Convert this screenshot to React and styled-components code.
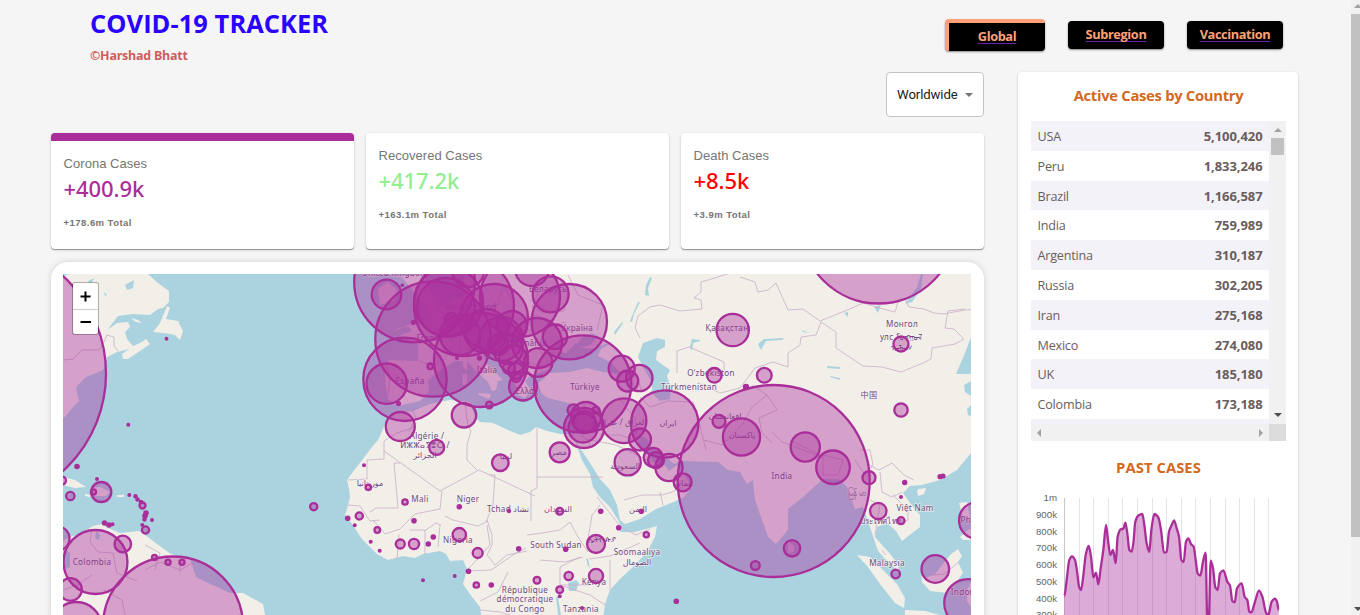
import React from "react";
import styled, { createGlobalStyle } from "styled-components";

const GlobalStyle = createGlobalStyle`
  * { box-sizing: border-box; }
  body { margin: 0; background: #f5f5f5; overflow: hidden; }
`;

const ui = `"Open Sans", "Noto Sans", sans-serif`;
const arial = `"Liberation Sans", Arial, sans-serif`;
const purple = "#aa2e9a";

const Frame = styled.div`
  display: flex;
  width: 1360px;
  height: 615px;
  overflow: hidden;
  background: #f5f5f5;
  font-family: ${ui};
`;
const Page = styled.main`
  width: 1351px;
  flex: none;
  display: flex;
  flex-direction: column;
`;
const Header = styled.header`
  height: 72px;
  flex: none;
  display: flex;
  justify-content: space-between;
  padding: 0 68px 0 90px;
`;
const Brand = styled.div`
  display: flex;
  flex-direction: column;
`;
const Title = styled.h1`
  margin: 6px 0 0;
  font-size: 25.4px;
  line-height: 34px;
  font-weight: 700;
  letter-spacing: 0.08px;
  white-space: nowrap;
  color: #2a00ff;
`;
const Author = styled.h5`
  margin: 7px 0 0;
  font-size: 12.4px;
  line-height: 18px;
  font-weight: 700;
  letter-spacing: -0.2px;
  color: #cd5c5c;
`;
const Nav = styled.nav`
  display: flex;
  align-items: flex-start;
  gap: 23px;
  padding-top: 19px;
`;
const NavButton = styled.a`
  width: ${(p) => (p.$active ? 100 : 96)}px;
  height: ${(p) => (p.$active ? 32 : 28)}px;
  margin-top: ${(p) => (p.$active ? 0 : 2)}px;
  border: 0 solid #ffa07a;
  border-width: ${(p) => (p.$active ? "4px 0 0 4px" : "0")};
  border-radius: 4px;
  background: #000;
  box-shadow: 0 1px 2px rgba(0, 0, 0, 0.45);
  text-align: center;
  font-size: 12.8px;
  line-height: 27px;
  font-weight: 700;
  letter-spacing: -0.4px;
  color: #ffa07a;
  text-decoration: underline;
  text-decoration-color: #6a22a8;
  text-decoration-skip-ink: none;
  text-underline-offset: 2px;
  text-decoration-thickness: 1px;
`;
const Body = styled.div`
  display: flex;
  gap: 34px;
  padding-left: 51px;
`;
const Main = styled.section`
  width: 933px;
  display: flex;
  flex-direction: column;
`;
const Select = styled.div`
  align-self: flex-end;
  width: 98px;
  height: 45px;
  display: flex;
  align-items: center;
  gap: 7px;
  padding-left: 10px;
  border: 1px solid #c4c4c4;
  border-radius: 4px;
  background: #fff;
  font-family: Roboto, ${arial};
  font-size: 13.2px;
  letter-spacing: -0.12px;
  color: #222;
`;
const Caret = styled.i`
  border: 4px solid transparent;
  border-top-color: #757575;
  border-bottom: 0;
`;
const Cards = styled.div`
  display: flex;
  gap: 12px;
  margin-top: 16px;
`;
const StatCard = styled.article`
  width: 303px;
  height: 116px;
  padding: 13px 12.6px;
  border-top: ${(p) => (p.$active ? `8px solid ${purple}` : "0")};
  border-radius: 4px;
  background: #fff;
  box-shadow: 0 1px 0 #999, 0 1px 3px rgba(0, 0, 0, 0.2);
  font-family: ${arial};
  color: #757575;
`;
const StatLabel = styled.div`
  font-size: 13px;
  line-height: 20px;
  letter-spacing: 0.03px;
`;
const StatValue = styled.div`
  font-family: "Noto Sans", ${ui};
  font-size: 22px;
  line-height: 30px;
  margin-top: -1px;
  font-weight: 500;
  letter-spacing: -0.1px;
  color: ${(p) => p.$color};
`;
const StatTotal = styled.div`
  margin-top: 12px;
  font-size: 9.5px;
  line-height: 16px;
  font-weight: 700;
  letter-spacing: 0.45px;
`;
const MapCard = styled.section`
  margin-top: 13px;
  height: 370px;
  padding: 12px 13px 0 12px;
  border-radius: 17px;
  background: #fff;
  box-shadow: 0 0 6px rgba(0, 0, 0, 0.16);
`;
const MapView = styled.div`
  position: relative;
  height: 358px;
  overflow: hidden;
  background: #aad3df;
`;
const ZoomControl = styled.div`
  position: absolute;
  left: 9px;
  top: 8px;
  width: 27px;
  height: 53px;
  border: 1px solid rgba(0, 0, 0, 0.27);
  border-radius: 3px;
  background: #fff;
  background-clip: padding-box;
`;
const ZoomButton = styled.div`
  height: 26px;
  display: flex;
  align-items: center;
  justify-content: center;
  padding-right: 1px;
  & + & { height: 25px; border-top: 1px solid #ccc; }
`;
const Side = styled.aside`
  width: 280px;
  height: 560px;
  padding: 0 12px 0 13px;
  border-radius: 4px;
  background: #fff;
  box-shadow: 0 1px 3px rgba(0, 0, 0, 0.2);
`;
const SideTitle = styled.h3`
  margin: 0;
  height: ${(p) => p.$h}px;
  padding-top: ${(p) => p.$top}px;
  text-align: center;
  font-size: 14.8px;
  line-height: 20px;
  font-weight: 700;
  letter-spacing: ${(p) => p.$track}px;
  color: #d2691e;
`;
const TableBox = styled.div`
  display: grid;
  grid-template: 303px 17px / 238px 17px;
`;
const Table = styled.div`
  overflow: hidden;
`;
const Row = styled.div`
  height: 29.8px;
  display: flex;
  justify-content: space-between;
  padding: 0 6.5px;
  line-height: 31px;
  font-size: 12.6px;
  letter-spacing: -0.2px;
  color: #6a5d5d;
  background: ${(p) => (p.$odd ? "#f3f2f8" : "#fff")};
  b { font-weight: 700; font-size: 13px; letter-spacing: -0.08px; }
`;
const VBar = styled.div`
  display: flex;
  flex-direction: column;
  align-items: center;
  padding: 7px 0;
  background: #f1f1f1;
`;
const HBar = styled.div`
  display: flex;
  align-items: center;
  justify-content: space-between;
  padding: 0 6px;
  background: #f1f1f1;
`;
const Corner = styled.div`
  background: #dcdcdc;
`;
const Thumb = styled.div`
  flex: none;
  width: ${(p) => p.$w}px;
  height: ${(p) => p.$h}px;
  background: #c1c1c1;
`;
const Arrow = styled.i`
  width: 0;
  height: 0;
  flex: none;
  border: 4px solid transparent;
  ${(p) => ({
    up: "border-top:0;border-bottom-color:#a3a3a3;margin-bottom:6px;",
    down: "border-bottom:0;border-top-color:#505050;margin-top:auto;",
    left: "border-left:0;border-right-color:#a3a3a3;",
    right: "border-right:0;border-left-color:#a3a3a3;",
  })[p.$dir]}
`;
const PageBar = styled.div`
  width: 13px;
  flex: none;
  display: flex;
  flex-direction: column;
  align-items: center;
  padding: 4px 0 0;
  background: #f1f1f1;
`;
const PageBarEnd = styled.div`
  padding-top: 74px;
`;

const LAND = [
  // North America and nearby islands
  "M63 276L70 274H148L158 283L169 291V302L163 308L158 309L150 315L132 314L118 316L112 324L103 336L106 331L117 323L128 322L130 327L125 332L127 339L133 346L140 343L146 339L150 344L140 351L128 359L123 359L122 354L129 349L117 352L107 357L103 370L96 373L86 377L77 386L76 389L79 401L72 408L66 416L63 418Z",
  "M167 306L170 308L166 319L178 321L183 331L180 340L175 335L164 333L153 332L160 323Z",
  "M131 318L138 320L142 323L136 322Z",
  "M63 477L75 480L86 487L75 488L63 485Z",
  "M92 488L100 487L110 492L106 496L94 496Z",
  "M117 495h7v2h-7z", "M85 494l5 1v2l-5-1z",
  // South America
  "M63 541L70 537L80 534L93 526L102 524L108 528L120 533L139 531L148 537L157 544L171 554L190 559L196 577L206 582L230 593L243 593L263 604L266 620H63V570L70 567V553L63 548Z",
  // Africa
  "M378 440L387 420L396 413L413 411L430 404L450 400L470 402L475 417L480 422L493 423L508 430L520 435L530 432L536 427L547 431L560 434L573 434L576 443L582 460L590 474L593 487L600 497L610 507L618 520L622 528L620 532L635 532L657 526L655 537L647 552L633 567L620 579L610 590L605 604L603 620H482L480 607L472 597L463 584L467 569L463 560L450 561L446 554L440 551L423 554L415 558L403 556L388 560L377 554L362 539L352 524L345 515L347 509L350 497L349 489L347 480L355 469L363 459L372 447Z",
  // Europe
  "M384 365L390 360L418 361L418 345L400 335L412 331L408 326L420 325L430 313L442 306L449 300L463 297L468 290L462 282L466 274H971V337L965 353L956 374H971V453L957 470L940 480L922 485L910 486L903 493L910 503L920 515L920 527L902 541L896 531L887 523L877 527L875 537L882 545L891 555L898 565L899 572L888 562L878 551L872 533L868 521L863 507L855 509L847 487L839 479L823 479L815 486L803 497L788 509L788 530L776 544L768 537L762 520L755 500L753 480L747 484L740 472L728 470L718 462L682 461L674 464L666 457L655 452L646 438L638 434L638 445L646 451L653 462L663 463L669 471L677 465L683 473L692 487L684 497L676 501L656 509L640 519L625 524L620 520L617 505L610 490L600 479L590 463L580 448L574 437L578 422L580 403L572 404L560 401L548 398L542 394L538 383L545 378L543 373L552 373L570 372L587 368L603 372L621 374L612 363L598 356L601 349L613 342L602 345L592 349L583 348L576 343L566 353L560 352L552 362L548 370L540 373L531 375L525 381L531 390L525 398L518 395L514 382L507 370L497 362L490 352L483 352L486 364L498 375L503 380L498 381L496 390L492 391L488 382L475 370L467 361L455 361L445 367L428 380L429 391L420 401L398 406L388 399L386 387Z",
  "M393 332L408 325L432 322L423 315L428 308L418 299L412 290L401 276L424 274L431 291L438 304L434 318L422 325L398 328Z",
  "M378 289L388 282L397 290L394 301L380 305Z",
  "M463 361l4-2v11l-4-3zM462 374h5v10l-4 1zM478 393l13 1-2 5-10-4z",
  // South-east Asian islands
  "M857 555L870 557L884 571L897 584L905 598L904 608L895 603L880 584L868 567Z",
  "M905 610L925 611L940 615H905Z",
  "M921 572L925 578L935 574L950 555L958 549L962 556L958 562L963 573L955 584L948 593L930 591L922 582Z",
  "M918 489l8-1-2 6-6 2-1-4z", "M960 537l9-8 2 1v10h-8zM959 503l8-1 4 20-8-5z",
  "M788 541l6 5v6l-6 1zM967 590l4-8v25l-4-6z",
];
const WATER = [
  "M638 357L643 343L657 338L665 340V347L657 351L656 360L670 370L667 376L671 388L670 399L660 401L652 393V383L643 367Z",
  "M577 345l5-8 10-4 6 3 -7 9-8 2z",
  "M905 304l12-17 4-13h2l-2 15-9 13z",
  "M758 344l6-5 20-1-2 2-16 1-5 9z",
  "M568 583l8-3 3 3-3 8h-7z", "M586 558l2 8 2 2-2-9zM556 597l2 18h3l-3-18z",
  "M645 295l1-10 4-8 2 1-4 10 1 8z", "M638 302h2l-6 12-2 8-2-1zM614 332l8-10 1 1-8 12zM690 347l2-8 8 1v1l-7 2-1 8z",
  "M125 285l9-5-1 8-6 2zM88 281l7-3-5 6zM104 292l3 3-2 1zM80 297l8 2-4 2z",
  "M844 313l4-1v5zM827 366l13 1v2l-13-1zM830 376l10 2v2l-10-3zM802 330l7 3-6-1z", "M874 307l7-2-3 8z",
  "M96 531l4 4-1 5-4-2z",
  "M971 381l-7 4 1 7 6 4z",
  "M971 405l-4 4 1 6 3 1z",
];
const BORDERS = [
  "M63 360L73 359L82 350L99 350L104 342L107 335L114 337V346L118 351",
  "M384 451v8l-17 1v19l-19 1M384 451L440 491M384 451v-10l13-8 15-5 4-5M412 409l4 9-7 14",
  "M400 463l-6 0 4 45h-22l-6 4M348 505l12 1 10 15 10-1M440 491l39-21 11 5M465 402l3 24 3 5-4 14v15l10 10",
  "M442 491l-2 18-15 3-10 2-15 15-15 5-12-14M490 475l5 0 -2 30-7 17-8 4-25-6-8-4M490 475l45 21M537 428v60l-6 3v30M537 477h66",
  "M399 534l-2 25M425 530v25M440 525l-2 22M410 530l16 0 10-7 5 2M487 525l3 20-18 20-5 5M487 520l5 15 0 10-5 10 8 10 12-10 20-4M527 535l15-2 18-3 10-8 8 15 10 15M526 548l-10 5-25 17-24 1M540 560l25 2 18-5M580 557l-20 10 0 18 28 0M560 585l30 10 15 10",
  "M587 545l5-30 8-10M597 497l24 30 15 8 14-6M640 543l-30 13-21 3M610 560v30M480 601l18-9 10-20M480 610l20 2 10 3",
  "M624 500l18-5h20l10-3 12-6M660 492l3 13M586 439l30 6 35 17M590 445l-9-12M600 435l20 0 15 5",
  "M635 328l5 10M635 328l3-12 12-9 10-2 20 6 22-2-1-9-7-2 7-6v-10l14-4 15-5 9-4M677 373v-22l12-4 35 15v14l-10 10M740 277l15 5 3 10 10-2 8-7 12 27 15-1 17 12 25-10 18-8 20 6 12 3 4-13 6 0 4 8 15 2 10 4 10 1 20-4 20-1 5-15",
  "M821 322l15 10v16l9 6 18 12 19 1 19 5 22-9 8-4 1-11 23-4 9-5-10-10-9-1 3-17 17-2",
  "M821 322l-5 13-15 2-1 8-12 8 0 14-15-5-18 6-15 20-20 5-22-10M752 385l15 10 10 15-18 8 3 15 10 10M767 395l-15 12-10 18-20 20-18-5M772 432l10 10 40 15M790 440l30 15M823 455l20 5-5 15-15 0zM860 450l10 0 3 15-8 10-10-15M869 465l10 5 13-7 12 12 10 5M880 472l2 20 10 5 10-5M893 495l15 15v10l-10 5-5-5M870 500l10 5-5 30M882 550l4 5",
  "M420 361l14 5M441 365l12-20-8-15M438 310l12 12 15 8 10-5M450 295l15-2 13 20 20-8 5-20M503 285l12 20-10 15-24 8M481 330l25 5 8 15-20 4M515 320l22-5 14 10 15-3M540 289l-8 18 12 6 20-2 4-20M568 275l10 20 25 10-6 25M515 340l20 3 8 12M510 360l20 3 12 4M386 366l4 10-2 20",
  "M640 397l10 10 18-6 25 1 8 28 5 20M620 400l15 18 2 18M580 403l15 10-5 20M612 370l25 5 4 15",
  "M92 529l-2 13 8 10 15 1 4 20 20 8M145 570l15-8 20 8 18-10M145 545l15 8-5 17M180 562v10M104 590l18 10 3 15M92 575l-15 10-14 5",
  "M932 575l12-1 15-12M460 320v28l12 2M500 314l-4 20M530 300l20 12",
];
const LABELS = [
  [395, 276, "United Kingdom"], [471, 310, "Deutschland"], [430, 341, "France"], [410, 384, "España"], [487, 373, "Italia"],
  [548, 292, "Беларусь"], [577, 331, "Україна"], [529, 346, "România"], [585, 390, "Türkiye"], [527, 394, "Ελλάς"],
  [727, 331, "Қазақстан"], [711, 376, "O‘zbekiston"], [689, 390, "Türkmenistan"], [668, 426, "ایران"], [622, 425, "العراق / عێراق"],
  [902, 327, "Монгол"], [901, 340, "улс ᠮᠣᠩᠭᠣᠯ"], [901, 351, "ᠤᠯᠤᠰ"], [869, 398, "中国"], [725, 419, "افغانستان"], [742, 438, "پاکستان"],
  [782, 479, "India"], [857, 496, "မြန်မာ"], [915, 511, "Việt Nam"], [881, 524, "ประเทศไทย"], [887, 566, "Malaysia"], [983, 523, "Philippines"], [971, 595, "Indonesia"],
  [427, 439, "Algérie /"], [425, 448, "ⵍⵣⵣⴰⵢⴻⵔ /"], [425, 458, "الجزائر"], [370, 486, "موريتانيا"], [420, 502, "Mali"], [468, 502, "Niger"],
  [508, 512, "Tchad تشاد"], [458, 543, "Nigeria"], [506, 459, "ليبيا"], [559, 455, "مصر"], [625, 469, "السعودية"], [684, 486, "عمان"],
  [558, 512, "السودان"], [638, 512, "اليمن"], [556, 548, "South Sudan"], [602, 542, "ኢትዮጵያ"], [637, 555, "Soomaaliya"], [637, 565, "الصومال"],
  [594, 585, "Kenya"], [525, 593, "République"], [525, 602, "démocratique"], [525, 612, "du Congo"], [581, 612, "Tanzania"], [92, 565, "Colombia"],
];
const RINGS = [
  [-26, 373.5, 132], [62, 480.5, 4], [70.3, 496, 4.2], [93.5, 492, 2.6], [101.3, 492, 10], [142.5, 505.5, 3], [145.5, 530, 3.6],
  [95.5, 562, 32], [122.8, 544, 8.3], [57.5, 538.5, 12], [70.5, 589.5, 11.3], [76.5, 627, 25], [173, 626.5, 70], [154.5, 557.5, 2.5], [168, 562.3, 2.6], [182, 562.3, 2.6],
  [414.5, 282, 60.3], [386.5, 294.5, 14.8], [433, 339, 57.7], [405, 379.3, 41.7], [386.7, 383.7, 20.2], [430.3, 366.3, 2.8], [400.3, 426.5, 14.5], [464, 415.3, 12.2], [489.3, 405, 3.3],
  [448.5, 302, 34.5], [464, 306, 50], [446, 307, 29], [481, 360, 47], [468, 271, 16], [494, 318, 34], [451.5, 320, 7], [460, 335, 20],
  [486, 331, 22], [512, 326, 15], [501, 339, 22], [508, 349, 15], [498, 345, 10], [513, 359, 14], [516, 371, 8], [509, 368, 6], [516, 377, 5], [520, 297, 40],
  [532, 269, 17], [550.7, 294.3, 18], [537, 343, 25], [555, 336.7, 12.2], [538, 362.5, 14.3], [523, 386.5, 14], [569.3, 321.7, 37.7], [582.7, 384, 48.6],
  [621.7, 368.7, 13], [627.7, 381, 10.5], [639.3, 378, 13.2], [624, 420.7, 22.4], [664.7, 424, 33.7], [584, 428, 20], [583, 428, 14.5], [584.5, 422, 11], [586, 417, 15], [573.3, 410, 5.7], [596, 410, 3.4],
  [640, 439.5, 11], [653.3, 457.5, 9.5], [656, 460, 8], [669, 467.5, 13.6], [682.7, 482.3, 9], [627.7, 462.3, 13.1], [559.7, 452.3, 10], [500.3, 462.7, 8.3], [436.7, 447.3, 7.5],
  [732.7, 330, 16.2], [714.3, 375.3, 7.3], [764.3, 375.3, 7.4], [719, 421.3, 6.5], [741.5, 437, 18.6], [773.7, 481, 96], [805.3, 447, 14.6], [833, 467.3, 16.8], [869, 477.7, 6.5], [792, 548.3, 8.2], [755.3, 565.5, 4.4],
  [878.3, 511, 8.2], [901, 520.7, 3.5], [895.7, 574, 4.3], [935.3, 569, 13.8], [968, 603, 23.8], [977.5, 520.5, 18.5], [901, 344, 7.5], [901, 410, 6.7], [878.5, 226, 77.5],
  [313.7, 506.7, 3.6], [368.3, 487.3, 2.7], [405, 502, 2.7], [359.3, 516, 3.6], [377.3, 530, 2.8], [400.3, 544, 4.5], [414, 544, 5.1], [459.3, 534.7, 6.7], [477.7, 553, 5], [476.3, 585, 2.7],
  [559.7, 511.3, 3.4], [596, 544, 9], [646.3, 534.7, 2.6], [568.7, 576, 4.2], [596, 576, 7.1], [537, 580.3, 3.4], [559.7, 589.7, 3.4],
];
const DOTS = [
  [166.5, 338.7, 2], [128.3, 424.7, 2], [77, 466.5, 2.8], [97, 479, 2], [129.3, 495, 2], [135.5, 496.3, 2.2], [137.5, 499.5, 2.3], [141, 502, 2.3], [146, 513, 2.8], [145, 516, 2.8], [144.5, 519.5, 2.2], [152, 520, 2], [142.3, 525, 2],
  [104.5, 523, 2.8], [109, 525, 2.8], [112.5, 524.3, 2], [402.3, 285.3, 1.8], [413.5, 322.3, 2.6], [398.5, 403.5, 2.6], [457, 358, 2], [479.5, 358, 2.8], [746, 387, 3.2],
  [904.7, 482.5, 2.7], [901, 497, 2], [940, 476.7, 2.6], [943, 476, 2.6], [364, 465.3, 2], [347.7, 518.3, 2.8], [354.7, 525.3, 2], [370.7, 541.7, 2], [379.7, 550.7, 2], [428.3, 544, 2.8], [433.3, 537, 2.8], [414, 520.7, 2.8], [459.3, 506.7, 2.8],
  [468.5, 571.3, 2.8], [454.7, 576, 2], [423, 580.3, 2], [491.3, 585, 2.8], [509, 511, 2.2], [600.7, 511.3, 2.8], [641.3, 511.3, 2.8], [618.7, 527.7, 2.8], [518.7, 548.7, 2.8], [565.7, 549.3, 2.8], [559.7, 596.3, 2], [582, 608, 2], [676.3, 601.3, 2.8],
];

const WorldMap = () => (
  <svg width="908" height="341" viewBox="63 274 908 341" style={{ display: "block" }}>
    <rect x="63" y="274" width="908" height="341" fill="#aad3df" />
    <g fill="#f2efe9">{LAND.map((d) => <path key={d} d={d} />)}</g>
    <g fill="#aad3df">{WATER.map((d) => <path key={d} d={d} />)}</g>
    <g fill="none" stroke="#c9adc8" strokeWidth="0.8" strokeLinejoin="round">
      {BORDERS.map((d) => <path key={d} d={d} />)}
    </g>
    <g fill="#6d4a7c" stroke="#f7f3f2" strokeWidth="1.4" strokeOpacity="0.75" paintOrder="stroke" textAnchor="middle"
      fontFamily='"Noto Sans", "DejaVu Sans", "Noto Sans CJK SC", sans-serif' fontSize="8.1" letterSpacing="0.3">
      {LABELS.map(([x, y, t]) => <text key={t} x={x} y={y}>{t}</text>)}
    </g>
    <g fill={purple} fillOpacity="0.4" stroke={purple} strokeWidth="2.3">
      {RINGS.map(([x, y, r], i) => <circle key={i} cx={x} cy={y} r={r} />)}
    </g>
    <g fill={purple}>{DOTS.map(([x, y, r], i) => <circle key={i} cx={x} cy={y} r={r} />)}</g>
  </svg>
);

const SERIES = [
  [163,1068],[170,1020],[178,960],[186,949],[195,960],[202,1000],[207,1040],[213,1050],[219,1015],[228,940],[236,918],[243,950],[250,1012],[258,998],[265,1033],[272,985],[280,930],[288,855],[294,900],[301,945],[309,930],[317,970],[323,890],[332,868],[340,866],[346,848],[352,880],[358,930],[365,935],[370,910],[376,845],[386,826],[397,822],[403,855],[410,910],[418,936],[424,870],[433,822],[445,832],[453,870],[462,938],[470,936],[477,875],[485,855],[492,841],[500,865],[507,890],[514,960],[521,966],[528,905],[535,895],[543,912],[551,920],[557,960],[563,1000],[571,1007],[579,965],[587,938],[592,1150],[596,1150],[602,962],[609,985],[616,1042],[623,1050],[630,1000],[640,991],[652,1025],[660,1037],[667,1083],[674,1087],[681,1045],[695,1030],[704,1070],[712,1080],[718,1115],[724,1117],[735,1085],[747,1052],[757,1070],[768,1118],[775,1125],[785,1085],[795,1076],[801,1085],[806,1110],
].map(([x, y]) => [x / 3 - 21, y / 3 - 245]);

const smooth = (pts) => {
  const slope = pts.map((p, i) => {
    if (i === 0 || i === pts.length - 1) return 0;
    const a = (p[1] - pts[i - 1][1]) / (p[0] - pts[i - 1][0]);
    const b = (pts[i + 1][1] - p[1]) / (pts[i + 1][0] - p[0]);
    return a * b <= 0 ? 0 : (2 * a * b) / (a + b);
  });
  return pts.map((p, i) => {
    if (i === 0) return `M${p[0]} ${p[1]}`;
    const q = pts[i - 1];
    const h = (p[0] - q[0]) / 3;
    return `C${q[0] + h} ${q[1] + slope[i - 1] * h} ${p[0] - h} ${p[1] - slope[i] * h} ${p[0]} ${p[1]}`;
  }).join("");
};
const LINE = smooth(SERIES);
const GRID = [48.5, 62.5, 77.5, 91.5, 106.5, 121.5, 135.5, 150.5, 164.5, 179.5, 194.5, 208.5, 223.5, 237.5];
const TICKS = ["1m", "900k", "800k", "700k", "600k", "500k", "400k", "300k"];

const PastCases = () => (
  <svg width="255" height="130" viewBox="0 0 255 130" style={{ display: "block" }}>
    <g stroke="#e5e5e5">{GRID.map((x) => <path key={x} d={`M${x} 13V130`} />)}</g>
    <path d="M33.5 13V130" stroke="#c8c8c8" />
    <path d={`${LINE}V140H33.3Z`} fill={purple} fillOpacity="0.4" />
    <path d={LINE} fill="none" stroke={purple} strokeWidth="2.3" strokeLinejoin="round" />
    <g fill="#666" fontFamily={arial} fontSize="9.7" textAnchor="end">
      {TICKS.map((t, i) => <text key={t} x="26" y={16.2 + i * 16.75}>{t}</text>)}
    </g>
  </svg>
);

const COUNTRIES = [
  ["USA", "5,100,420"], ["Peru", "1,833,246"], ["Brazil", "1,166,587"], ["India", "759,989"], ["Argentina", "310,187"], ["Russia", "302,205"],
  ["Iran", "275,168"], ["Mexico", "274,080"], ["UK", "185,180"], ["Colombia", "173,188"], ["", ""],
];
const STATS = [
  ["Corona Cases", "+400.9k", "+178.6m Total", purple],
  ["Recovered Cases", "+417.2k", "+163.1m Total", "lightgreen"],
  ["Death Cases", "+8.5k", "+3.9m Total", "red"],
];

export default function App() {
  return (
    <Frame>
      <GlobalStyle />
      <Page>
        <Header>
          <Brand>
            <Title>COVID-19 TRACKER</Title>
            <Author>©Harshad Bhatt</Author>
          </Brand>
          <Nav>
            <NavButton $active>Global</NavButton>
            <NavButton>Subregion</NavButton>
            <NavButton>Vaccination</NavButton>
          </Nav>
        </Header>
        <Body>
          <Main>
            <Select>Worldwide<Caret /></Select>
            <Cards>
              {STATS.map(([label, value, total, color], i) => (
                <StatCard key={label} $active={i === 0}>
                  <StatLabel>{label}</StatLabel>
                  <StatValue $color={color}>{value}</StatValue>
                  <StatTotal>{total}</StatTotal>
                </StatCard>
              ))}
            </Cards>
            <MapCard>
              <MapView>
                <WorldMap />
                <ZoomControl>
                  <ZoomButton>
                    <svg width="11" height="11"><path d="M.5 5.5h10M5.5.5v10" stroke="#000" strokeWidth="2" /></svg>
                  </ZoomButton>
                  <ZoomButton>
                    <svg width="11" height="11"><path d="M.5 5h10.500" stroke="#000" strokeWidth="2" /></svg>
                  </ZoomButton>
                </ZoomControl>
              </MapView>
            </MapCard>
          </Main>
          <Side>
            <SideTitle $h={49} $top={13} $track={-0.3}>Active Cases by Country</SideTitle>
            <TableBox>
              <Table>
                {COUNTRIES.map(([name, count], i) => (
                  <Row key={i} $odd={i % 2 === 0}><span>{name}</span><b>{count}</b></Row>
                ))}
              </Table>
              <VBar>
                <Arrow $dir="up" />
                <Thumb $w={13} $h={17} />
                <Arrow $dir="down" />
              </VBar>
              <HBar><Arrow $dir="left" /><Arrow $dir="right" /></HBar>
              <Corner />
            </TableBox>
            <SideTitle $h={44} $top={16} $track={0.05}>PAST CASES</SideTitle>
            <PastCases />
          </Side>
        </Body>
      </Page>
      <PageBar>
        <Arrow $dir="up" />
        <Thumb $w={13} $h={523} />
        <PageBarEnd><Arrow $dir="down" /></PageBarEnd>
      </PageBar>
    </Frame>
  );
}
